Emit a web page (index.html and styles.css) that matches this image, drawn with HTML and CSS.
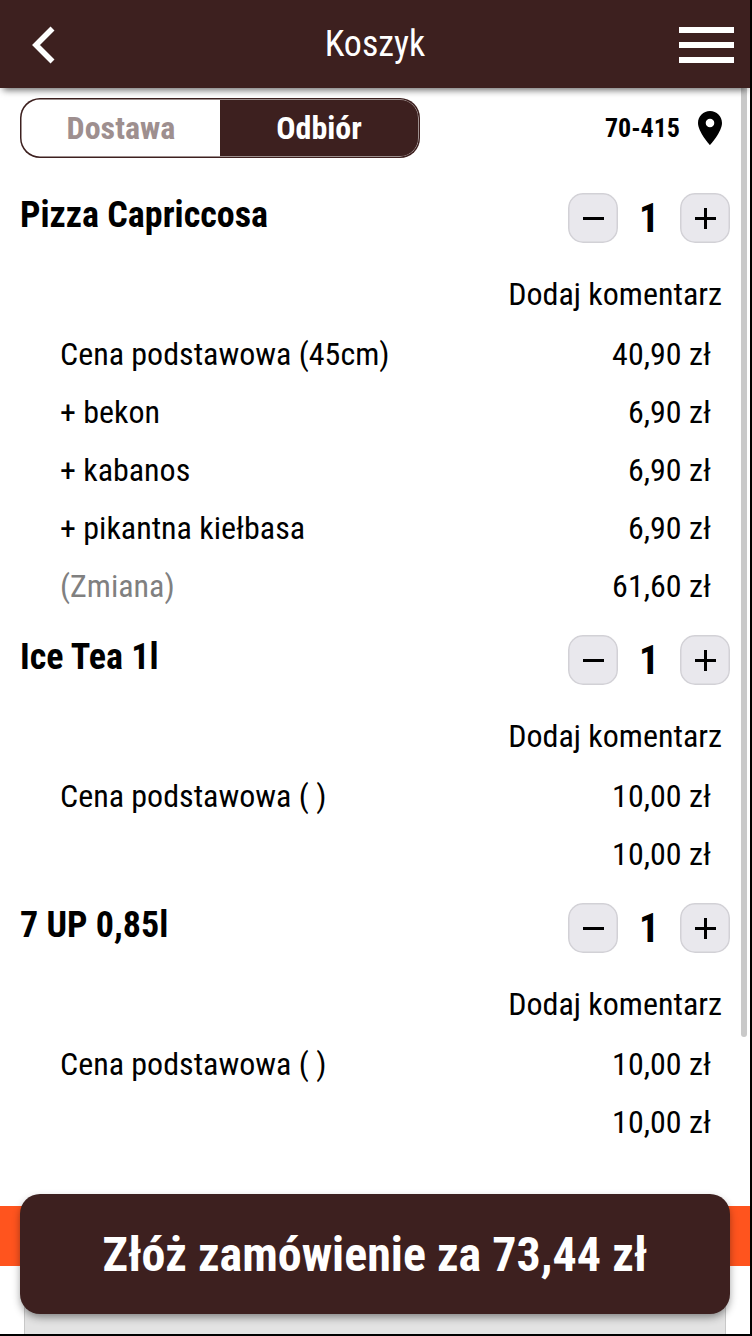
FILE: index.html
```html
<!DOCTYPE html>
<html lang="pl">
<head>
<meta charset="UTF-8">
<meta name="viewport" content="width=device-width, initial-scale=1.0">
<title>Koszyk</title>
<link rel="stylesheet" href="styles.css">
</head>
<body>
<div class="screen">
    <header class="topbar">
        <svg class="back" width="24" height="38" viewBox="0 0 24 38"><path d="M20.5 2.5 L4 19 L20.5 35.5" fill="none" stroke="#fff" stroke-width="5.6"/></svg>
        <h1><span class="t">Koszyk</span></h1>
        <div class="menu"><span></span><span></span><span></span></div>
    </header>

    <main class="content">
        <div class="options">
            <div class="switch">
                <div class="choice"><span class="t">Dostawa</span></div>
                <div class="choice active"><span class="t">Odbiór</span></div>
            </div>
            <div class="place">
                <span class="t">70-415</span>
                <svg width="24" height="34" viewBox="5 2 14 20" preserveAspectRatio="none"><path d="M12 2C8.13 2 5 5.13 5 9c0 5.25 7 13 7 13s7-7.75 7-13c0-3.87-3.13-7-7-7zm0 9.5a2.5 2.5 0 0 1 0-5 2.5 2.5 0 0 1 0 5z"/></svg>
            </div>
        </div>

        <section class="item">
            <div class="item-head">
                <h2><span class="t">Pizza Capriccosa</span></h2>
                <div class="stepper"><button class="minus"></button><b><span class="t">1</span></b><button class="plus"></button></div>
            </div>
            <div class="comment"><span class="t">Dodaj komentarz</span></div>
            <div class="row"><span class="t">Cena podstawowa (45cm)</span><span class="t">40,90 zł</span></div>
            <div class="row"><span class="t">+ bekon</span><span class="t">6,90 zł</span></div>
            <div class="row"><span class="t">+ kabanos</span><span class="t">6,90 zł</span></div>
            <div class="row"><span class="t">+ pikantna kiełbasa</span><span class="t">6,90 zł</span></div>
            <div class="row"><span class="t change">(Zmiana)</span><span class="t">61,60 zł</span></div>
        </section>

        <section class="item">
            <div class="item-head">
                <h2><span class="t">Ice Tea 1l</span></h2>
                <div class="stepper"><button class="minus"></button><b><span class="t">1</span></b><button class="plus"></button></div>
            </div>
            <div class="comment"><span class="t">Dodaj komentarz</span></div>
            <div class="row"><span class="t">Cena podstawowa ( )</span><span class="t">10,00 zł</span></div>
            <div class="row"><span class="t"></span><span class="t">10,00 zł</span></div>
        </section>

        <section class="item">
            <div class="item-head">
                <h2><span class="t">7 UP 0,85l</span></h2>
                <div class="stepper"><button class="minus"></button><b><span class="t">1</span></b><button class="plus"></button></div>
            </div>
            <div class="comment"><span class="t">Dodaj komentarz</span></div>
            <div class="row"><span class="t">Cena podstawowa ( )</span><span class="t">10,00 zł</span></div>
            <div class="row"><span class="t"></span><span class="t">10,00 zł</span></div>
        </section>
        <div class="scrollbar"></div>
    </main>

    <!-- order button lies over the orange strip and the grey card -->
    <footer class="bottom">
        <div class="strip"></div>
        <div class="card"></div>
        <button class="order"><span class="t">Złóż zamówienie za 73,44 zł</span></button>
    </footer>
</div>
</body>
</html>
```
FILE: styles.css
```css
* {
    box-sizing: border-box;
}
body {
    margin: 0;
    background: #000;
    font-family: 'Roboto Condensed', Roboto, sans-serif;
    font-stretch: 75%;
    font-size: 32px;
    color: #000;
}
h1, h2 {
    margin: 0;
}
button {
    font: inherit;
    border: none;
    padding: 0;
}
.t {
    white-space: nowrap;
}
.screen {
    width: 750px;
    height: 1334px;
    background: #fff;
    display: flex;
    flex-direction: column;
    overflow: hidden;
}
.topbar {
    height: 88px;
    flex: none;
    background: #3d201f;
    color: #fff;
    display: grid;
    grid-template-columns: 55px 1fr 55px;
    align-items: center;
    padding: 0 16px 0 32px;
    box-shadow: 0 5px 7px -3px rgba(0, 0, 0, 0.6);
    position: relative;
    z-index: 1;
}
.topbar h1 {
    font-size: 36px;
    font-weight: 400;
    text-align: center;
    padding-right: 16px;
}
.back {
    margin-top: 2px;
}
.menu {
    display: flex;
    flex-direction: column;
    gap: 9px;
    margin-top: 2px;
}
.menu span {
    height: 6px;
    background: #fff;
}
.content {
    height: 1106px;
    flex: none;
    padding: 10px 20px 0;
    position: relative;
}
.options {
    display: flex;
    justify-content: space-between;
    align-items: center;
    height: 60px;
    margin-bottom: 35px;
}
.switch {
    width: 400px;
    height: 60px;
    display: flex;
    box-shadow: inset 0 0 0 1.5px #3d201f;
    border-radius: 20px;
    padding: 2px;
}
.choice {
    flex: 1;
    display: flex;
    align-items: center;
    justify-content: center;
    font-weight: 700;
    color: #9e8f8f;
}
.choice.active {
    background: #3d201f;
    color: #fff;
    border-radius: 0 18px 18px 0;
    box-shadow: inset 0 0 0 0.5px #3d201f;
}
.place {
    display: flex;
    align-items: center;
    gap: 18px;
    font-size: 26px;
    font-weight: 700;
    padding-right: 8px;
}
.item {
    padding-bottom: 20px;
}
.item-head {
    display: flex;
    justify-content: space-between;
    height: 50px;
}
.item-head h2 {
    font-size: 36px;
    line-height: 44px;
}
.stepper {
    display: flex;
    width: 162px;
    justify-content: space-between;
    align-items: center;
    font-size: 40px;
}
.stepper button {
    width: 50px;
    height: 50px;
    border-radius: 15px;
    box-shadow: inset 0 0 0 1.5px #d2d1d6;
    background-color: #e9e8ed;
    background-image: linear-gradient(#000, #000);
    background-size: 21px 3px;
    background-position: 15px 24px;
    background-repeat: no-repeat;
}
.stepper .plus {
    background-image: linear-gradient(#000, #000), linear-gradient(#000, #000);
    background-size: 21px 3px, 3px 21px;
    background-position: 15px 24px, 24px 15px;
}
.comment {
    height: 82px;
    padding: 20px 8px 0 0;
    line-height: 62px;
    text-align: right;
}
.row {
    display: flex;
    justify-content: space-between;
    height: 58px;
    line-height: 58px;
    padding: 0 19px 0 40px;
}
.change {
    color: #808080;
}
.scrollbar {
    position: absolute;
    top: 0;
    right: 3px;
    width: 6px;
    height: 949px;
    background: #c9c9c9;
    border-radius: 0 0 3px 3px;
}
.bottom {
    height: 140px;
    flex: none;
    position: relative;
    padding: 0 20px;
}
.strip {
    position: absolute;
    left: 0;
    right: 0;
    top: 12px;
    height: 60px;
    background: #ff541e;
}
.card {
    position: absolute;
    left: 24px;
    right: 24px;
    top: 100px;
    height: 60px;
    background: #e3e3e3;
    border: 1px solid #c8c8c8;
}
.order {
    position: relative;
    width: 100%;
    height: 120px;
    background: #3d201f;
    color: #fff;
    border-radius: 20px;
    font-size: 48px;
    font-weight: 700;
    box-shadow: 0 4px 8px -1px rgba(0, 0, 0, 0.45);
}
```
